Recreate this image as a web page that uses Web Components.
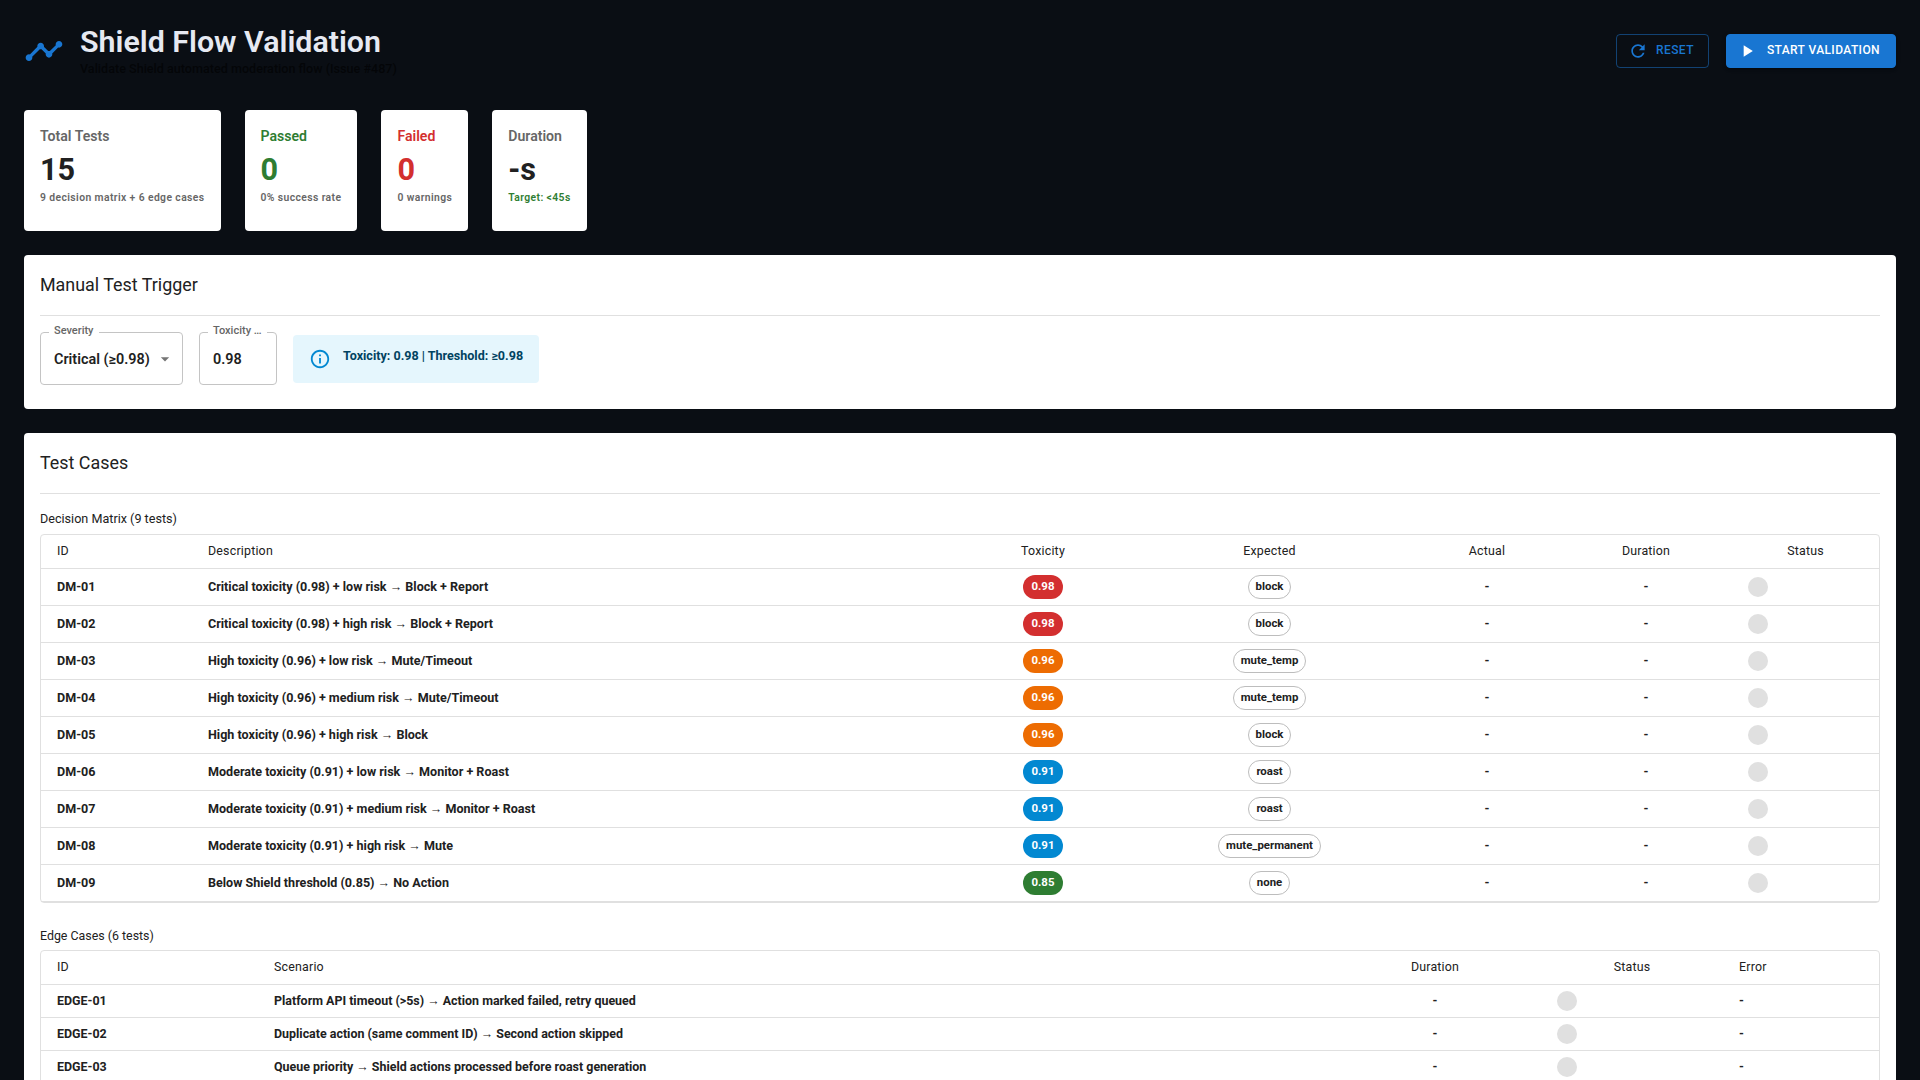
<!DOCTYPE html>
<html lang="en">
<head>
<meta charset="utf-8">
<title>Shield Flow Validation</title>
<style>
    html { overflow: hidden; }
    body {
        margin: 0;
        background: #0a0e14;
        font-family: Roboto, "Liberation Sans", sans-serif;
        color: #212121;
    }
</style>
</head>
<body>
<shield-page></shield-page>

<script>
const ICONS = {
    timeline: 'M23 8c0 1.1-.9 2-2 2-.18 0-.35-.02-.51-.07l-3.56 3.55c.05.16.07.34.07.52 0 1.1-.9 2-2 2s-2-.9-2-2c0-.18.02-.36.07-.52l-2.55-2.55c-.16.05-.34.07-.52.07s-.36-.02-.52-.07l-4.55 4.56c.05.16.07.33.07.51 0 1.1-.9 2-2 2s-2-.9-2-2 .9-2 2-2c.18 0 .35.02.51.07l4.56-4.55C8.02 9.36 8 9.18 8 9c0-1.1.9-2 2-2s2 .9 2 2c0 .18-.02.36-.07.52l2.55 2.55c.16-.05.34-.07.52-.07s.36.02.52.07l3.55-3.56C19.02 8.35 19 8.18 19 8c0-1.1.9-2 2-2s2 .9 2 2z',
    refresh: 'M17.65 6.35C16.2 4.9 14.21 4 12 4c-4.42 0-7.99 3.58-7.99 8s3.57 8 7.99 8c3.73 0 6.84-2.55 7.73-6h-2.08c-.82 2.33-3.04 4-5.65 4-3.31 0-6-2.69-6-6s2.69-6 6-6c1.66 0 3.14.69 4.22 1.78L13 11h7V4l-2.35 2.35z',
    play: 'M8 5v14l11-7z',
    info: 'M11 7h2v2h-2zm0 4h2v6h-2zm1-9C6.48 2 2 6.48 2 12s4.48 10 10 10 10-4.48 10-10S17.52 2 12 2zm0 18c-4.41 0-8-3.59-8-8s3.59-8 8-8 8 3.59 8 8-3.59 8-8 8z',
    arrow: 'M7 10l5 5 5-5z',
};

const icon = (name, size, color) =>
    `<svg width="${size}" height="${size}" viewBox="0 0 24 24" fill="${color}" style="display:block;flex:none"><path d="${ICONS[name]}"></path></svg>`;

class ShieldButton extends HTMLElement {
    connectedCallback() {
        const primary = this.hasAttribute('primary');
        this.attachShadow({ mode: 'open' }).innerHTML = `
            <style>
                :host { display: inline-flex; }
                button {
                    display: flex;
                    align-items: center;
                    gap: ${primary ? 10 : 8}px;
                    height: 34px;
                    box-sizing: border-box;
                    padding: 0 ${primary ? 15 : 14}px 0 ${primary ? 10 : 11}px;
                    border-radius: 4px;
                    border: 1px solid ${primary ? '#1976d2' : 'rgba(25,118,210,.5)'};
                    background: ${primary ? '#1976d2' : 'transparent'};
                    color: ${primary ? '#fff' : '#1976d2'};
                    box-shadow: ${primary ? '0 3px 1px -2px rgba(0,0,0,.2), 0 2px 2px rgba(0,0,0,.14), 0 1px 5px rgba(0,0,0,.12)' : 'none'};
                    font: 500 12px/16px Roboto, sans-serif;
                    letter-spacing: .4px;
                    text-transform: uppercase;
                }
                span { margin-top: -2px; }
            </style>
            <button>${icon(this.getAttribute('icon'), 20, primary ? '#fff' : '#1976d2')}<span><slot></slot></span></button>
        `;
    }
}

class StatCard extends HTMLElement {
    connectedCallback() {
        const tones = { green: '#2e7d32', red: '#d32f2f' };
        const tone = tones[this.getAttribute('tone')];
        const captionTone = tones[this.getAttribute('caption-tone')];
        this.attachShadow({ mode: 'open' }).innerHTML = `
            <style>
                :host {
                    display: block;
                    background: #fff;
                    border-radius: 4px;
                    padding: 16px 16px 23px;
                }
                .label { font: 600 14.1px/21px Roboto, sans-serif; color: ${tone || '#666'}; }
                .value { font: 700 30.6px/37px Roboto, sans-serif; margin-top: 4px; color: ${tone || '#212121'}; }
                .caption { font: 600 10.35px/20px Roboto, sans-serif; letter-spacing: .4px; color: ${captionTone || '#666'}; white-space: nowrap; }
            </style>
            <div class="label">${this.getAttribute('label')}</div>
            <div class="value">${this.getAttribute('value')}</div>
            <div class="caption">${this.getAttribute('caption')}</div>
        `;
    }
}

class SectionCard extends HTMLElement {
    connectedCallback() {
        this.attachShadow({ mode: 'open' }).innerHTML = `
            <style>
                :host {
                    display: block;
                    background: #fff;
                    border-radius: 4px;
                    padding: 16px;
                }
                h2 {
                    margin: 0;
                    height: 44px;
                    box-sizing: border-box;
                    padding-top: 1px;
                    font: 450 17.9px/26px Roboto, sans-serif;
                    color: #212121;
                }
                hr { border: 0; height: 1px; background: #e0e0e0; margin: 0 0 15px; }
            </style>
            <h2>${this.getAttribute('heading')}</h2>
            <hr>
            <slot></slot>
        `;
    }
}

class OutlinedField extends HTMLElement {
    connectedCallback() {
        const arrow = this.hasAttribute('select') ? icon('arrow', 20, '#757575') : '';
        this.attachShadow({ mode: 'open' }).innerHTML = `
            <style>
                :host {
                    display: flex;
                    position: relative;
                    align-items: center;
                    justify-content: space-between;
                    box-sizing: border-box;
                    width: ${this.getAttribute('width')}px;
                    height: 53px;
                    padding: 0 7px 0 13px;
                    border: 1px solid #c4c4c4;
                    border-radius: 4px;
                }
                .label {
                    position: absolute;
                    left: 8px;
                    top: -10px;
                    padding: 0 5px;
                    background: #fff;
                    font: 500 11px/15px Roboto, sans-serif;
                    color: #666;
                    white-space: nowrap;
                }
                .value { margin-top: 2px; font: 600 14.4px/20px Roboto, sans-serif; color: #212121; white-space: nowrap; }
            </style>
            <span class="label">${this.getAttribute('label')}</span>
            <span class="value"><slot></slot></span>
            ${arrow}
        `;
    }
}

class InfoAlert extends HTMLElement {
    connectedCallback() {
        this.attachShadow({ mode: 'open' }).innerHTML = `
            <style>
                :host {
                    display: flex;
                    align-items: center;
                    gap: 12px;
                    box-sizing: border-box;
                    height: 48px;
                    padding: 0 16px;
                    border-radius: 4px;
                    background: #e5f6fd;
                }
                .text {
                    font: 700 12.55px/16px Roboto, sans-serif;
                    color: #014361;
                    margin-top: -5px;
                    white-space: nowrap;
                }
            </style>
            ${icon('info', 22, '#0288d1')}
            <span class="text"><slot></slot></span>
        `;
    }
}

class CaseTable extends HTMLElement {
    // columns: [title, width, alignment]; rows are plain arrays, a cell can hold markup
    set config({ columns, rows, rowHeight, fontSize }) {
        const head = columns.map(c => `<th style="text-align:${c[2] || 'left'}">${c[0]}</th>`).join('');
        const body = rows.map(r =>
            `<tr>${r.map((cell, i) => `<td style="text-align:${columns[i][2] || 'left'}">${cell}</td>`).join('')}</tr>`
        ).join('');
        this.attachShadow({ mode: 'open' }).innerHTML = `
            <style>
                :host {
                    display: block;
                    border: 1px solid #e0e0e0;
                    border-radius: 4px;
                }
                table { width: 100%; table-layout: fixed; border-collapse: separate; border-spacing: 0; }
                th, td {
                    box-sizing: border-box;
                    padding: 0 16px;
                    border-bottom: 1px solid #e0e0e0;
                    color: #212121;
                    white-space: nowrap;
                }
                th { height: 34px; padding-bottom: 2px; font: 400 12.4px/16px Roboto, sans-serif; letter-spacing: .2px; }
                td { height: ${rowHeight}px; padding-bottom: 1px; font: 700 ${fontSize}px/16px Roboto, sans-serif; }
                tr:last-child td { border-bottom: ${this.hasAttribute('open-end') ? '1px solid #e0e0e0' : '0'}; }
                .dot { display: block; width: 20px; height: 20px; border-radius: 50%; background: #e0e0e0; }
                .tox, .act {
                    display: inline-flex;
                    align-items: center;
                    justify-content: center;
                    box-sizing: border-box;
                    height: 24px;
                    border-radius: 12px;
                    font: 700 11.4px/1 Roboto, sans-serif;
                    vertical-align: middle;
                }
                .tox { width: 40px; color: #fff; }
                .act { padding: 0 7px; border: 1px solid #bdbdbd; color: #212121; }
            </style>
            <table>
                <colgroup>${columns.map(c => `<col style="width:${c[1]}px">`).join('')}</colgroup>
                <thead><tr>${head}</tr></thead>
                <tbody>${body}</tbody>
            </table>
        `;
    }
}

class ShieldPage extends HTMLElement {
    connectedCallback() {
        this.attachShadow({ mode: 'open' }).innerHTML = `
            <style>
                :host { display: block; padding: 24px; }
                header {
                    display: flex;
                    align-items: center;
                    justify-content: space-between;
                    height: 54px;
                    margin-bottom: 32px;
                }
                .brand, .actions { display: flex; align-items: center; }
                .brand { gap: 16px; }
                .actions { gap: 17px; }
                h1 { margin: 0; font: 600 30.4px/36px Roboto, sans-serif; color: #e6e9f2; }
                .sub { font: 500 12.6px/20px Roboto, sans-serif; color: rgba(0,0,0,.6); margin: -1px 0 0; }
                .stats { display: flex; gap: 24px; align-items: flex-start; margin-bottom: 24px; }
                .trigger { display: flex; align-items: center; gap: 16px; padding: 1px 0 8px; }
                section-card + section-card { margin-top: 24px; }
                .group {
                    font: 400 12.6px/20px Roboto, sans-serif;
                    color: #212121;
                    margin-bottom: 5px;
                }
                .group.next { font-size: 12.4px; margin-top: 23px; margin-bottom: 4px; }
            </style>
            <header>
                <div class="brand">
                    ${icon('timeline', 40, '#1976d2')}
                    <div>
                        <h1>Shield Flow Validation</h1>
                        <div class="sub">Validate Shield automated moderation flow (Issue #487)</div>
                    </div>
                </div>
                <div class="actions">
                    <shield-button icon="refresh">Reset</shield-button>
                    <shield-button icon="play" primary>Start Validation</shield-button>
                </div>
            </header>
            <div class="stats">
                <stat-card label="Total Tests" value="15" caption="9 decision matrix + 6 edge cases"></stat-card>
                <stat-card label="Passed" value="0" caption="0% success rate" tone="green"></stat-card>
                <stat-card label="Failed" value="0" caption="0 warnings" tone="red"></stat-card>
                <stat-card label="Duration" value="-s" caption="Target: &lt;45s" caption-tone="green"></stat-card>
            </div>
            <section-card heading="Manual Test Trigger">
                <div class="trigger">
                    <outlined-field label="Severity" width="143" select>Critical (≥0.98)</outlined-field>
                    <outlined-field label="Toxicity …" width="78">0.98</outlined-field>
                    <info-alert>Toxicity: 0.98 | Threshold: ≥0.98</info-alert>
                </div>
            </section-card>
            <section-card heading="Test Cases">
                <div class="group">Decision Matrix (9 tests)</div>
                <case-table id="matrix" open-end></case-table>
                <div class="group next">Edge Cases (6 tests)</div>
                <case-table id="edge"></case-table>
            </section-card>
        `;

        const dot = '<span class="dot"></span>';
        const tox = (v, c) => `<span class="tox" style="background:${c}">${v}</span>`;
        const act = t => `<span class="act">${t}</span>`;
        const RED = '#d32f2f', ORANGE = '#ed6c02', BLUE = '#0288d1', GREEN = '#2e7d32';

        const matrix = [
            ['DM-01', 'Critical toxicity (0.98) + low risk → Block + Report', '0.98', RED, 'block'],
            ['DM-02', 'Critical toxicity (0.98) + high risk → Block + Report', '0.98', RED, 'block'],
            ['DM-03', 'High toxicity (0.96) + low risk → Mute/Timeout', '0.96', ORANGE, 'mute_temp'],
            ['DM-04', 'High toxicity (0.96) + medium risk → Mute/Timeout', '0.96', ORANGE, 'mute_temp'],
            ['DM-05', 'High toxicity (0.96) + high risk → Block', '0.96', ORANGE, 'block'],
            ['DM-06', 'Moderate toxicity (0.91) + low risk → Monitor + Roast', '0.91', BLUE, 'roast'],
            ['DM-07', 'Moderate toxicity (0.91) + medium risk → Monitor + Roast', '0.91', BLUE, 'roast'],
            ['DM-08', 'Moderate toxicity (0.91) + high risk → Mute', '0.91', BLUE, 'mute_permanent'],
            ['DM-09', 'Below Shield threshold (0.85) → No Action', '0.85', GREEN, 'none'],
        ];
        this.shadowRoot.getElementById('matrix').config = {
            rowHeight: 37,
            fontSize: 12.55,
            columns: [
                ['ID', 151], ['Description', 769], ['Toxicity', 164, 'center'], ['Expected', 289, 'center'],
                ['Actual', 146, 'center'], ['Duration', 172, 'center'], ['Status', 147, 'center'],
            ],
            rows: matrix.map(m => [m[0], m[1], tox(m[2], m[3]), act(m[4]), '-', '-', dot]),
        };

        const edge = [
            ['EDGE-01', 'Platform API timeout (&gt;5s) → Action marked failed, retry queued'],
            ['EDGE-02', 'Duplicate action (same comment ID) → Second action skipped'],
            ['EDGE-03', 'Queue priority → Shield actions processed before roast generation'],
        ];
        this.shadowRoot.getElementById('edge').config = {
            rowHeight: 33,
            fontSize: 12.45,
            columns: [
                ['ID', 217], ['Scenario', 1071], ['Duration', 212, 'center'], ['Status', 182, 'center'], ['Error', 156],
            ],
            rows: edge.map(e => [e[0], e[1], '-', dot, '-']),
        };
    }
}

customElements.define('shield-button', ShieldButton);
customElements.define('stat-card', StatCard);
customElements.define('section-card', SectionCard);
customElements.define('outlined-field', OutlinedField);
customElements.define('info-alert', InfoAlert);
customElements.define('case-table', CaseTable);
customElements.define('shield-page', ShieldPage);
</script>
</body>
</html>
